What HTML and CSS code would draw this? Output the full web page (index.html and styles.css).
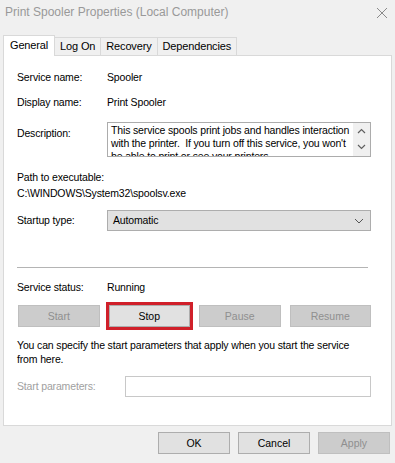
FILE: index.html
```html
<!DOCTYPE html>
<html>
<head>
<meta charset="utf-8">
<link rel="stylesheet" href="styles.css">
<title>Print Spooler Properties (Local Computer)</title>
</head>
<body>
<div class="dialog">
  <div class="titlebar">
    <span class="title">Print Spooler Properties (Local Computer)</span>
    <svg class="close" width="12" height="12" viewBox="0 0 12 12"><path d="M1 1L11 11M11 1L1 11" stroke="#8a8a8a" stroke-width="1"/></svg>
  </div>

  <div class="tabs">
    <div class="tab active">General</div>
    <div class="tab">Log On</div>
    <div class="tab">Recovery</div>
    <div class="tab">Dependencies</div>
  </div>

  <div class="panel">
    <div class="row first">
      <span class="label">Service name:</span>
      <span>Spooler</span>
    </div>
    <div class="row">
      <span class="label">Display name:</span>
      <span>Print Spooler</span>
    </div>
    <div class="row desc-row">
      <span class="label desc-label">Description:</span>
      <div class="textbox">
        <div class="textbox-text">This service spools print jobs and handles interaction<br>with the printer.&nbsp; If you turn off this service, you won't<br>be able to print or see your printers.</div>
        <div class="scroll">
          <svg width="9" height="6" viewBox="0 0 9 6"><path d="M1 5L4.5 1.5L8 5" fill="none" stroke="#606060" stroke-width="1.2"/></svg>
          <svg width="9" height="6" viewBox="0 0 9 6"><path d="M1 1L4.5 4.5L8 1" fill="none" stroke="#606060" stroke-width="1.2"/></svg>
        </div>
      </div>
    </div>

    <div class="path">
      <div>Path to executable:</div>
      <div>C:\WINDOWS\System32\spoolsv.exe</div>
    </div>

    <div class="row startup">
      <span class="label">Startup type:</span>
      <div class="select">
        <span>Automatic</span>
        <svg width="10" height="6" viewBox="0 0 10 6"><path d="M1 1L5 5L9 1" fill="none" stroke="#555" stroke-width="1"/></svg>
      </div>
    </div>

    <div class="sep"></div>

    <div class="row status">
      <span class="label">Service status:</span>
      <span>Running</span>
    </div>

    <div class="actions">
      <button class="btn" disabled>Start</button>
      <button class="btn marked">Stop</button>
      <button class="btn" disabled>Pause</button>
      <button class="btn" disabled>Resume</button>
    </div>

    <p class="hint">You can specify the start parameters that apply when you start the service from here.</p>

    <div class="row params">
      <span class="label muted">Start parameters:</span>
      <div class="input"></div>
    </div>
  </div>

  <div class="footer">
    <button class="btn">OK</button>
    <button class="btn">Cancel</button>
    <button class="btn" disabled>Apply</button>
  </div>
</div>
</body>
</html>
```

FILE: styles.css
```css
html, body {
    margin: 0;
    padding: 0;
}
body {
    background: #f0f0f0;
    font-family: "Liberation Sans", Arial, sans-serif;
    font-size: 10.5px;
    letter-spacing: -0.15px;
    line-height: 15px;
    color: #000;
}
.dialog {
    width: 395px;
    height: 463px;
    overflow: hidden;
}
.titlebar {
    display: flex;
    align-items: center;
    justify-content: space-between;
    height: 25px;
    padding: 0 5px 0 5px;
}
.title {
    color: #999999;
    font-size: 12px;
    letter-spacing: 0;
}
.close {
    margin-right: 2px;
}

/* tabs */
.tabs {
    display: flex;
    align-items: flex-end;
    height: 30px;
    padding-left: 3px;
}
.tab {
    border: 1px solid #d9d9d9;
    border-bottom: none;
    margin-left: -1px;
    padding: 0 5px;
    height: 17px;
    line-height: 17px;
    background: #f0f0f0;
    font-size: 11px;
}
.tab.active {
    background: #fff;
    height: 20px;
    line-height: 19px;
    margin-left: 0;
    padding: 0 6px 0 6px;
    position: relative;
    z-index: 1;
    margin-bottom: -1px;
}

.panel {
    box-sizing: border-box;
    margin: 0 3px 0 3px;
    border: 1px solid #d9d9d9;
    background: #fff;
    height: 371px;
    padding: 14px 20px 0 13px;
}
.row {
    display: flex;
    align-items: center;
    margin-top: 10px;
}
.row.first {
    margin-top: 0;
}
.label {
    width: 90px;
    flex: none;
}
.muted {
    color: #a0a0a0;
}

.desc-row {
    align-items: flex-start;
    margin-top: 12px;
}
.desc-label {
    padding-top: 4px;
}
.textbox {
    flex: 1;
    height: 33px;
    border: 1px solid #acacac;
    display: flex;
    overflow: hidden;
}
.textbox-text {
    flex: 1;
    padding: 1px 0 0 3px;
    line-height: 13px;
    white-space: nowrap;
    overflow: hidden;
}
.scroll {
    width: 17px;
    flex: none;
    background: #f0f0f0;
    display: flex;
    flex-direction: column;
    align-items: center;
    padding-top: 5px;
    gap: 10px;
}

.path {
    margin-top: 12px;
    line-height: 16px;
}

.startup {
    margin-top: 9px;
}
.select {
    flex: 1;
    height: 19px;
    border: 1px solid #adadad;
    background: #e1e1e1;
    display: flex;
    align-items: center;
    justify-content: space-between;
    padding: 0 6px 0 5px;
}

.sep {
    height: 1px;
    background: #b4b4b4;
    margin: 36px 3px 0 0;
}

.status {
    margin-top: 12px;
}

.actions {
    display: grid;
    grid-template-columns: repeat(4, 1fr);
    gap: 9px;
    margin-top: 10px;
    padding-left: 1px;
}
.btn {
    font: inherit;
    height: 22px;
    border: 1px solid #adadad;
    background: #e1e1e1;
    color: #000;
    padding: 0;
}
.btn:disabled {
    background: #cccccc;
    border-color: #bfbfbf;
    color: #8f8f8f;
}
.marked {
    outline: 3px solid #d0202a;
    outline-offset: 0;
}

.hint {
    margin: 11px 0 0 0;
    line-height: 14px;
}

.params {
    margin-top: 10px;
}
.params .label {
    width: 108px;
}
.input {
    flex: 1;
    height: 19px;
    border: 1px solid #c8c8c8;
}

.footer {
    display: flex;
    justify-content: flex-end;
    gap: 8px;
    padding: 6px 5px 0 0;
}
.footer .btn {
    width: 72px;
}
```
